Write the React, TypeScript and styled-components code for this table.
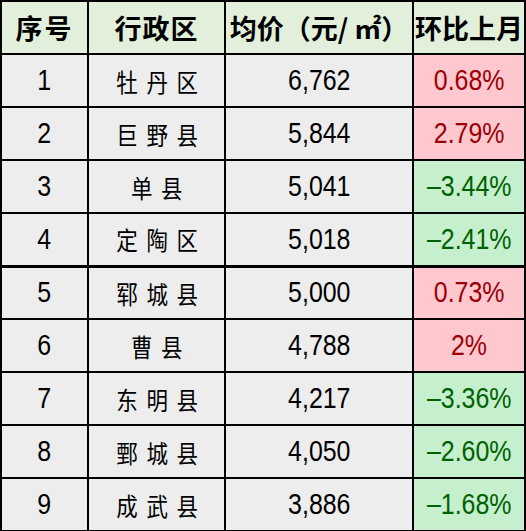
import styled, { createGlobalStyle } from "styled-components";

const GlobalStyle = createGlobalStyle`
  body {
    margin: 0;
    background: #ffffff;
  }
`;

type Trend = "up" | "down";

interface Row {
  no: number;
  district: string;
  price: string;
  change: string;
  trend: Trend;
}

const rows: Row[] = [
  { no: 1, district: "牡丹区", price: "6,762", change: "0.68%", trend: "up" },
  { no: 2, district: "巨野县", price: "5,844", change: "2.79%", trend: "up" },
  { no: 3, district: "单县", price: "5,041", change: "–3.44%", trend: "down" },
  { no: 4, district: "定陶区", price: "5,018", change: "–2.41%", trend: "down" },
  { no: 5, district: "郓城县", price: "5,000", change: "0.73%", trend: "up" },
  { no: 6, district: "曹县", price: "4,788", change: "2%", trend: "up" },
  { no: 7, district: "东明县", price: "4,217", change: "–3.36%", trend: "down" },
  { no: 8, district: "鄄城县", price: "4,050", change: "–2.60%", trend: "down" },
  { no: 9, district: "成武县", price: "3,886", change: "–1.68%", trend: "down" },
];

// the whole sheet
const Table = styled.table`
  table-layout: fixed;
  border-collapse: collapse;
`;

const HeadCell = styled.th<{ $w: number }>`
  width: ${(p) => p.$w}px;
  height: 51px;
  padding: 0;
  border: 2px solid #000;
  background: #e2efda;
  text-align: center;
  color: #000;
  font-family: "Noto Sans CJK SC", sans-serif;
  font-weight: 700;
  font-size: 27px;
  white-space: nowrap;
  overflow: hidden;
`;

// body row, the one after 定陶区 has a heavier rule
const BodyRow = styled.tr<{ $split?: boolean }>`
  height: 53px;
  td {
    border-bottom-width: ${(p) => (p.$split ? "3px" : "2px")};
  }
`;

const Cell = styled.td<{ $trend?: Trend }>`
  padding: 0;
  border: 2px solid #000;
  text-align: center;
  white-space: nowrap;
  overflow: hidden;
  background: ${(p) =>
    p.$trend === "up" ? "#ffc7ce" : p.$trend === "down" ? "#c6efce" : "#ededed"};
  color: ${(p) =>
    p.$trend === "up" ? "#9c0006" : p.$trend === "down" ? "#006100" : "#000"};
`;

// narrow glyphs like the source sheet
const Squeeze = styled.span<{ $spacing?: number }>`
  display: inline-block;
  transform: scaleX(0.86);
  letter-spacing: ${(p) => p.$spacing ?? 0}px;
`;

const Num = styled(Squeeze)`
  font-family: "Liberation Sans", Arial, sans-serif;
  font-size: 29px;
`;

const Name = styled(Squeeze)`
  font-family: "Noto Sans CJK SC", sans-serif;
  font-size: 25px;
  margin-right: -10px;
`;

const HeadText = styled(Squeeze)`
  transform: none;
`;

const App = () => {
  return (
    <>
      <GlobalStyle />
      <Table>
        <thead>
          <tr>
            <HeadCell $w={85}>
              <HeadText $spacing={2}>序号</HeadText>
            </HeadCell>
            <HeadCell $w={135}>
              <HeadText $spacing={1}>行政区</HeadText>
            </HeadCell>
            <HeadCell $w={186}>
              <HeadText>均价（元/ ㎡）</HeadText>
            </HeadCell>
            <HeadCell $w={110}>
              <HeadText>环比上月</HeadText>
            </HeadCell>
          </tr>
        </thead>
        <tbody>
          {rows.map((r) => (
            <BodyRow key={r.no} $split={r.no === 4}>
              <Cell>
                <Num>{r.no}</Num>
              </Cell>
              <Cell>
                <Name $spacing={10}>{r.district}</Name>
              </Cell>
              <Cell>
                <Num>{r.price}</Num>
              </Cell>
              <Cell $trend={r.trend}>
                <Num>{r.change}</Num>
              </Cell>
            </BodyRow>
          ))}
        </tbody>
      </Table>
    </>
  );
};

export default App;
